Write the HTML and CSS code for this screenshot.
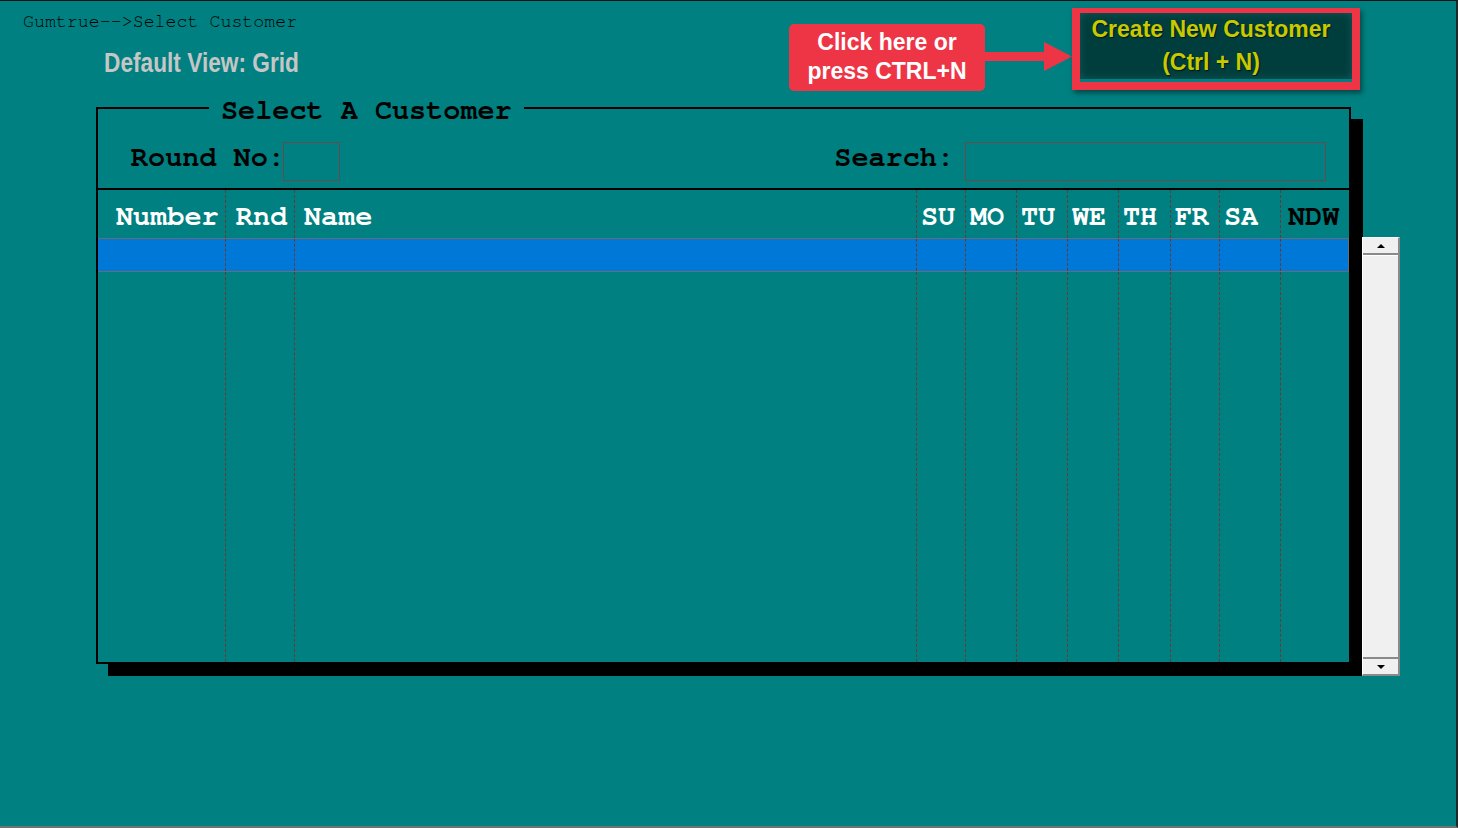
FILE: index.html
```html
<!DOCTYPE html>
<html>
<head>
    <title>Select Customer</title>
    <link rel="stylesheet" href="styles.css">
</head>
<body>
    <div class="screen">
        <header class="topbar">
            <div class="titles">
                <div class="crumb">Gumtrue--&gt;Select Customer</div>
                <div class="view-label">Default View: Grid</div>
            </div>
            <div class="callout">Click here or<br>press CTRL+N</div>
            <svg class="arrow" width="87" height="30" viewBox="0 0 87 30">
                <rect x="0" y="10" width="60" height="9" fill="#ee3546"/>
                <polygon points="59,0 87,14.5 59,29" fill="#ee3546"/>
            </svg>
            <div class="create-btn">
                <div class="create-inner">
                    <div class="create-text">Create New Customer<br>(Ctrl + N)</div>
                </div>
            </div>
        </header>

        <div class="work">
            <section class="panel">
                <div class="legend">Select A Customer</div>
                <div class="toolbar">
                    <div class="field">
                        <label>Round No:</label>
                        <div class="input round"></div>
                    </div>
                    <div class="field search">
                        <label>Search:</label>
                        <div class="input query"></div>
                    </div>
                </div>
                <div class="grid">
                    <div class="row head">
                        <span class="c-num">Number</span>
                        <span class="c-rnd">Rnd</span>
                        <span class="c-name">Name</span>
                        <span class="c-day">SU</span>
                        <span class="c-day">MO</span>
                        <span class="c-day">TU</span>
                        <span class="c-day">WE</span>
                        <span class="c-day">TH</span>
                        <span class="c-day">FR</span>
                        <span class="c-day">SA</span>
                        <span class="c-day ndw">NDW</span>
                    </div>
                    <div class="row sel">
                        <span></span><span></span><span></span><span></span><span></span><span></span>
                        <span></span><span></span><span></span><span></span><span></span>
                    </div>
                    <div class="row fill">
                        <span></span><span></span><span></span><span></span><span></span><span></span>
                        <span></span><span></span><span></span><span></span><span></span>
                    </div>
                </div>
            </section>

            <div class="scrollbar">
                <div class="sb-btn sb-up"><i class="tri-up"></i></div>
                <div class="sb-track"></div>
                <div class="sb-btn sb-down"><i class="tri-down"></i></div>
            </div>
        </div>
    </div>
</body>
</html>
```

FILE: styles.css
```css
html, body {
    margin: 0;
    padding: 0;
    background: #008080;
}
.screen {
    width: 1458px;
    height: 828px;
    box-sizing: border-box;
    border-top: 1px solid #111;
    border-right: 2px solid #1e2a2a;
    border-bottom: 2px solid #727272;
    overflow: hidden;
}

/* top area */
.topbar {
    display: flex;
    align-items: flex-start;
    height: 106px;
}
.titles {
    width: 789px;
    flex: none;
}
.crumb {
    margin-top: 11px;
    padding-left: 23px;
    font-family: "Nimbus Mono PS", "Nimbus Mono L", "FreeMono", "Courier New", "Liberation Mono", monospace;
    font-size: 18.3px;
    line-height: 20px;
    color: #000;
}
.view-label {
    width: max-content;
    margin: 16px 0 0 104px;
    font-family: "Liberation Sans", sans-serif;
    font-weight: bold;
    font-size: 27px;
    line-height: 30px;
    color: #c6c6c6;
    transform: scaleX(0.84);
    transform-origin: left center;
}
.callout {
    flex: none;
    width: 196px;
    height: 67px;
    margin-top: 23px;
    box-sizing: border-box;
    padding-top: 4px;
    background: #ee3546;
    border-radius: 5px;
    color: #fff;
    font-family: "Liberation Sans", sans-serif;
    font-weight: bold;
    font-size: 23px;
    line-height: 29px;
    text-align: center;
}
.arrow {
    flex: none;
    display: block;
    margin-top: 41px;
}
.create-btn {
    flex: none;
    width: 288px;
    height: 82px;
    margin-top: 7px;
    box-sizing: border-box;
    border: 8px solid #ee3546;
    box-shadow: 2px 3px 5px rgba(0, 0, 0, 0.45);
}
.create-inner {
    height: 100%;
    background: #003d3d;
    box-shadow: inset 0 0 8px rgba(40, 110, 110, 0.6);
    text-align: center;
}
.create-text {
    margin-top: -3px;
    padding-right: 10px;
    font-family: "Liberation Sans", sans-serif;
    font-weight: bold;
    font-size: 23px;
    line-height: 33px;
    color: #c9c900;
    text-shadow: 1px 1px 1px rgba(0, 0, 0, 0.6);
}

/* main panel */
.work {
    display: flex;
    align-items: flex-start;
}
.panel {
    flex: none;
    width: 1255px;
    height: 557px;
    margin-left: 96px;
    box-sizing: border-box;
    border: 2px solid #000;
    box-shadow: 12px 12px 0 #000;
    display: flex;
    flex-direction: column;
    font-family: "Nimbus Mono PS", "Nimbus Mono L", "FreeMono", "Courier New", "Liberation Mono", monospace;
    font-weight: bold;
    font-size: 28.5px;
}
.legend {
    align-self: flex-start;
    margin: -13px 0 0 111px;
    padding: 0 12px;
    background: #008080;
    line-height: 30px;
    color: #000;
}
.toolbar {
    display: flex;
    justify-content: space-between;
    align-items: flex-start;
    padding: 16px 23px 7px 33px;
    border-bottom: 2px solid #000;
}
.field {
    display: flex;
    align-items: flex-start;
}
.field label {
    color: #000;
    line-height: 30px;
    margin-top: 1px;
}
.input {
    height: 39px;
    box-sizing: border-box;
    border: 1px solid #654c4c;
}
.round {
    width: 57px;
    margin-left: -2px;
}
.query {
    width: 361px;
    margin-left: 11px;
}

/* grid */
.grid {
    flex: 1;
    display: flex;
    flex-direction: column;
}
.row {
    display: grid;
    grid-template-columns: 127px 69px 622px 49px 51px 51px 51px 52px 49px 61px 69px;
}
.row > span + span {
    border-left: 1px dashed #6b3838;
}
.head {
    height: 48px;
    align-items: stretch;
    color: #fff;
}
.head span {
    display: flex;
    align-items: center;
    padding-top: 5px;
    white-space: nowrap;
}
.head .c-num { padding-left: 18px; }
.head .c-rnd { padding-left: 10px; }
.head .c-name { padding-left: 9px; }
.head .c-day { padding-left: 4px; }
.head .ndw {
    padding-left: 7px;
    color: #000;
}
.sel {
    height: 34px;
    box-sizing: border-box;
    background: #0078d7;
    border-top: 1px solid #6c6c6c;
    border-bottom: 1px solid #6c6c6c;
    border-right: 1px solid #6c6c6c;
}
.fill {
    flex: 1;
}

/* scrollbar */
.scrollbar {
    flex: none;
    width: 38px;
    height: 439px;
    margin: 130px 0 0 11px;
    box-sizing: border-box;
    background: #f0f0f0;
    border-top: 1px solid #fff;
    border-left: 1px solid #fff;
    border-right: 2px solid #8a8a8a;
    border-bottom: 2px solid #8a8a8a;
    display: flex;
    flex-direction: column;
}
.sb-btn {
    height: 15px;
    display: flex;
    align-items: center;
    justify-content: center;
}
.sb-up {
    border-bottom: 2px solid #8a8a8a;
}
.sb-down {
    border-top: 2px solid #8a8a8a;
}
.sb-track {
    flex: 1;
    border-top: 1px solid #fff;
}
.tri-up, .tri-down {
    width: 0;
    height: 0;
    border-left: 4px solid transparent;
    border-right: 4px solid transparent;
}
.tri-up {
    border-bottom: 4px solid #000;
}
.tri-down {
    border-top: 4px solid #000;
}
```
